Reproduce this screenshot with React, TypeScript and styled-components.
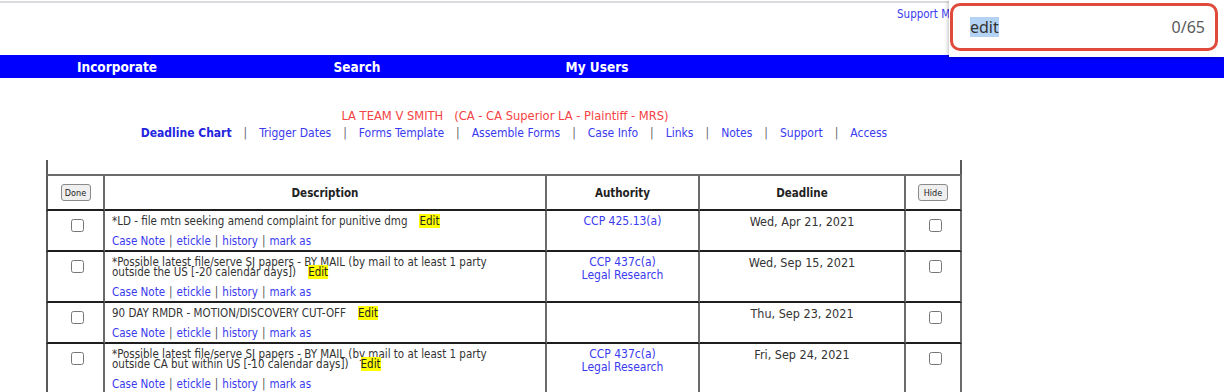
import React from "react";
import styled, { createGlobalStyle } from "styled-components";

const Global = createGlobalStyle`
  html, body { margin: 0; padding: 0; background: #fff; }
  body {
    font-family: "DejaVu Sans Condensed", "DejaVu Sans", sans-serif;
    font-size: 11.5px;
    color: #333;
  }
`;

const Page = styled.div`
  position: relative;
  width: 1224px;
  height: 392px;
  overflow: hidden;
`;

const TopHeader = styled.header`
  margin-top: 1px;
  border-top: 2px solid #dcdce0;
  height: 54px;
  box-sizing: border-box;
  padding: 4px 0 0 897px;
`;

const SupportLink = styled.a`
  color: #3a3af0;
  font-size: 11.5px;
  line-height: 13px;
  text-decoration: none;
  white-space: nowrap;
`;

const FindPopup = styled.div`
  position: absolute;
  top: 0;
  left: 949px;
  width: 275px;
  height: 57px;
  background: #fff;
  box-shadow: -1px 1px 4px rgba(0, 0, 0, 0.25);
  box-sizing: border-box;
  padding: 3px 6px 0 1px;
`;

const FindField = styled.div`
  height: 48px;
  border: 3px solid #e04a3a;
  border-radius: 10px;
  box-sizing: border-box;
  display: flex;
  align-items: center;
  justify-content: space-between;
  padding: 0 10px 0 17px;
  font-family: "Noto Sans", "Open Sans", sans-serif;
  font-size: 16px;
`;

const Query = styled.span`
  background: #b3d2f4;
  color: #333;
  line-height: 20px;
`;

const Count = styled.span`
  color: #5a5a5a;
`;

const BlueBar = styled.nav`
  height: 23px;
  background: #0000ff;
  display: grid;
  grid-template-columns: repeat(3, 240px);
  margin-left: -3px;
  align-items: center;
`;

const BarItem = styled.a`
  color: #fff;
  font-weight: bold;
  font-size: 13.5px;
  text-align: center;
  text-decoration: none;
`;

const Content = styled.main`
  width: 1010px;
`;

const CaseTitle = styled.div`
  margin-top: 31px;
  text-align: center;
  color: #f54242;
  font-size: 12.8px;
  line-height: 13px;
  white-space: pre;
`;

const SubNav = styled.div`
  margin-top: 5px;
  text-align: center;
  font-size: 12px;
  line-height: 13px;
  padding-left: 18px;
  white-space: nowrap;
`;

const SubLink = styled.a<{ $active?: boolean }>`
  color: ${(p) => (p.$active ? "#2323e0" : "#3a3af0")};
  font-weight: ${(p) => (p.$active ? "bold" : "normal")};
  text-decoration: none;
`;

const Sep = styled.span`
  color: #666;
  padding: 0 12px;
`;

const Table = styled.table`
  margin: 20px 0 0 46px;
  width: 916px;
  table-layout: fixed;
  border-collapse: separate;
  border-spacing: 0;
`;

const SpacerCell = styled.td`
  height: 14px;
  padding: 0;
  border-left: 2px solid #5a5a5a;
  border-right: 2px solid #5a5a5a;
`;

const Th = styled.th`
  height: 37px;
  box-sizing: border-box;
  padding: 0;
  text-align: center;
  vertical-align: middle;
  font-weight: bold;
  color: #222;
  border-top: 2px solid #6a6a6a;
  border-bottom: 2px solid #1e1e1e;
  border-right: 2px solid #6a6a6a;
  &:first-child { border-left: 2px solid #5a5a5a; }
`;

const Td = styled.td<{ $center?: boolean; $check?: boolean }>`
  box-sizing: border-box;
  padding: ${(p) => (p.$check ? "5px 5px 4px 9px" : "5px 7px 4px")};
  vertical-align: top;
  text-align: ${(p) => (p.$center ? "center" : "left")};
  border-bottom: 2px solid #1e1e1e;
  border-right: 2px solid #6a6a6a;
  &:first-child { border-left: 2px solid #5a5a5a; }
`;

const SmallButton = styled.button`
  font-family: "DejaVu Sans Condensed", "DejaVu Sans", sans-serif;
  font-size: 9px;
  height: 17px;
  width: 30px;
  padding: 0;
  border: 1px solid #8a8a8a;
  border-radius: 3px;
  background: #efefef;
  color: #222;
`;

const Check = styled.input.attrs({ type: "checkbox" })`
  display: block;
  margin: 3px auto 0;
  width: 13px;
  height: 13px;
`;

const Desc = styled.div`
  line-height: 10px;
  color: #333;
`;

const DescLine = styled.div`
  height: 10px;
  white-space: nowrap;
`;

const Edit = styled.span`
  background: #ffff00;
  color: #222;
  margin-left: 12px;
`;

const ActionRow = styled.div`
  margin-top: 10px;
  height: 10px;
  line-height: 10px;
`;

const ActionLink = styled.a`
  color: #3a3af0;
  text-decoration: none;
`;

const Bar = styled.span`
  color: #555;
  padding: 0 4px;
`;

const AuthLines = styled.div`
  line-height: 13px;
  margin-top: -1px;
  font-size: 12px;
`;

const AuthLink = styled.a`
  display: block;
  color: #3a3af0;
  text-decoration: none;
`;

const DateText = styled.div`
  line-height: 13px;
  margin-top: -1px;
  font-size: 12.5px;
  color: #333;
`;

type Row = {
  desc: string[];
  auth: string[];
  date: string;
};

const rows: Row[] = [
  {
    desc: ["*LD - file mtn seeking amend complaint for punitive dmg"],
    auth: ["CCP 425.13(a)"],
    date: "Wed, Apr 21, 2021",
  },
  {
    desc: [
      "*Possible latest file/serve SJ papers - BY MAIL (by mail to at least 1 party",
      "outside the US [-20 calendar days])",
    ],
    auth: ["CCP 437c(a)", "Legal Research"],
    date: "Wed, Sep 15, 2021",
  },
  {
    desc: ["90 DAY RMDR - MOTION/DISCOVERY CUT-OFF"],
    auth: [],
    date: "Thu, Sep 23, 2021",
  },
  {
    desc: [
      "*Possible latest file/serve SJ papers - BY MAIL (by mail to at least 1 party",
      "outside CA but within US [-10 calendar days])",
    ],
    auth: ["CCP 437c(a)", "Legal Research"],
    date: "Fri, Sep 24, 2021",
  },
];

const subNav = [
  "Deadline Chart",
  "Trigger Dates",
  "Forms Template",
  "Assemble Forms",
  "Case Info",
  "Links",
  "Notes",
  "Support",
  "Access",
];

const actions = ["Case Note", "etickle", "history", "mark as"];

export default function App() {
  return (
    <Page>
      <Global />
      <TopHeader>
        <SupportLink href="#">Support Materials</SupportLink>
      </TopHeader>
      <FindPopup>
        <FindField>
          <Query>edit</Query>
          <Count>0/65</Count>
        </FindField>
      </FindPopup>
      <BlueBar>
        <BarItem href="#">Incorporate</BarItem>
        <BarItem href="#">Search</BarItem>
        <BarItem href="#">My Users</BarItem>
      </BlueBar>
      <Content>
        <CaseTitle>{"LA TEAM V SMITH   (CA - CA Superior LA - Plaintiff - MRS)"}</CaseTitle>
        <SubNav>
          {subNav.map((s, i) => (
            <React.Fragment key={s}>
              {i > 0 && <Sep>|</Sep>}
              <SubLink href="#" $active={i === 0}>
                {s}
              </SubLink>
            </React.Fragment>
          ))}
        </SubNav>
        <Table>
          <colgroup>
            <col style={{ width: 59 }} />
            <col style={{ width: 442 }} />
            <col style={{ width: 153 }} />
            <col style={{ width: 206 }} />
            <col style={{ width: 56 }} />
          </colgroup>
          <tbody>
            <tr>
              <SpacerCell colSpan={5} />
            </tr>
            <tr>
              <Th>
                <SmallButton>Done</SmallButton>
              </Th>
              <Th>Description</Th>
              <Th>Authority</Th>
              <Th>Deadline</Th>
              <Th>
                <SmallButton>Hide</SmallButton>
              </Th>
            </tr>
            {rows.map((r, i) => (
              <tr key={i}>
                <Td $center $check>
                  <Check />
                </Td>
                <Td>
                  <Desc>
                    {r.desc.map((l, j) => (
                      <DescLine key={j}>
                        {l}
                        {j === r.desc.length - 1 && <Edit>Edit</Edit>}
                      </DescLine>
                    ))}
                  </Desc>
                  <ActionRow>
                    {actions.map((a, k) => (
                      <React.Fragment key={a}>
                        {k > 0 && <Bar>|</Bar>}
                        <ActionLink href="#">{a}</ActionLink>
                      </React.Fragment>
                    ))}
                  </ActionRow>
                </Td>
                <Td $center>
                  <AuthLines>
                    {r.auth.map((a) => (
                      <AuthLink key={a} href="#">
                        {a}
                      </AuthLink>
                    ))}
                  </AuthLines>
                </Td>
                <Td $center>
                  <DateText>{r.date}</DateText>
                </Td>
                <Td $center $check>
                  <Check />
                </Td>
              </tr>
            ))}
          </tbody>
        </Table>
      </Content>
    </Page>
  );
}
